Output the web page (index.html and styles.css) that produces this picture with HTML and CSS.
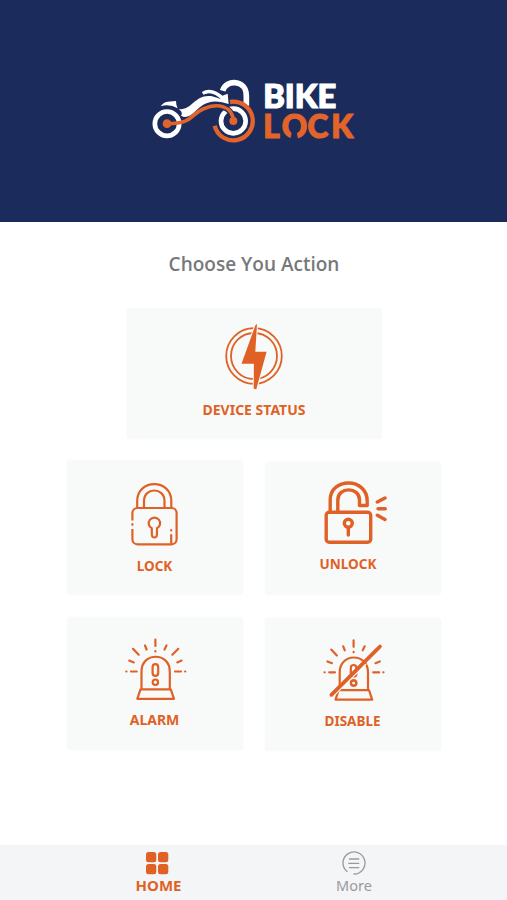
FILE: index.html
```html
<!DOCTYPE html>
<html lang="en">
<head>
<meta charset="utf-8">
<title>Bike Lock</title>
<link rel="stylesheet" href="styles.css">
</head>
<body>
<div class="app">
<header class="hero">
  <svg class="logo" viewBox="145 70 220 80">
    <g transform="translate(145 70) scale(.33333)" fill="none">
      <path d="M233 62C243 27 304 29 304 77V107" stroke="#fff" stroke-width="17"/>
      <path d="M255 96A58 58 0 1 1 209 167" stroke="#e2642a" stroke-width="13"/>
      <circle cx="66" cy="161" r="36.500" stroke="#fff" stroke-width="14"/>
      <circle cx="265" cy="153" r="37" stroke="#fff" stroke-width="14"/>
      <path d="M47 109Q54 97 68 95L93 93Q93 105 98 115Q74 101 47 109Z" fill="#fff"/>
      <path d="M101 117C138 123 148 78 190 78C207 78 216 84 226 87L230 78L248 71L251 102L231 97C190 88 168 107 148 127C133 141 120 144 108 137C114 130 108 122 101 117Z" fill="#fff"/>
      <path d="M173 70Q200 54 232 84" stroke="#fff" stroke-width="10"/>
      <path d="M170 121C218 99 263 108 265 153" stroke="#1b2c5c" stroke-width="17"/>
      <path d="M66 161C145 161 135 134 174 117C218 97 263 108 265 153" stroke="#e2642a" stroke-width="11"/>
      <circle cx="66" cy="161" r="13" fill="#e2642a"/>
      <circle cx="265" cy="153" r="12" fill="#e2642a"/>
    </g>
    <text class="brand brand-top" x="263.200" y="107.800" textLength="73" lengthAdjust="spacingAndGlyphs">BIKE</text>
    <text class="brand brand-bottom" x="263.200 281.800 307.500 331.300" y="137.600">LOCK</text>
    <path d="M290.200 139.500L291.500 134L290.500 129H298L297 134L298.300 139.500Z" fill="#1b2c5c"/>
  </svg>
</header>
<main class="content">
  <h1 class="title">Choose You Action</h1>
  <section class="card status">
    <svg class="icon" viewBox="214 320 80 74">
      <circle cx="254" cy="356" r="27.800" stroke-width="1.800"/>
      <circle cx="254" cy="356" r="23" stroke-width="1.800"/>
      <path d="M257 324L255.300 351.700H266.600L256.200 389.500L253.700 388.500L253.900 363.700H241.500L255.500 325Z" fill="#e06126" stroke="#f8faf9" stroke-width="2" paint-order="stroke"/>
    </svg>
    <span class="label">DEVICE STATUS</span>
  </section>
  <div class="grid">
    <section class="card lock">
      <svg class="icon" viewBox="115 475 80 74">
        <rect x="132.400" y="508" width="44.200" height="36.300" rx="5"/>
        <path d="M137.200 508V501C137.200 478.500 171.300 478.500 171.300 501V508M144 508V501C144 487 164.500 487 164.500 501V508"/>
        <path d="M151.800 528.300A5.700 5.700 0 1 1 157 528.300V534.500Q156.700 537.500 154.400 537.500Q152 537.500 151.800 534.500Z"/>
        <path d="M132.400 520.500V529" stroke="#f8faf9" stroke-width="4"/>
        <path d="M132.400 524.200V524.800M171.200 530V530.500M171.200 535V543" stroke-linecap="round"/>
      </svg>
      <span class="label">LOCK</span>
    </section>
    <section class="card unlock">
      <svg class="icon" viewBox="313 475 80 74">
        <g stroke-width="3.400">
          <rect x="326.200" y="512.300" width="44.500" height="30" rx="3"/>
          <path d="M330.200 512V500C330.200 477.200 367.200 477.200 367.200 501V505.500H359.500V500C359.500 486.500 337.800 486.500 337.800 500V512" stroke-linejoin="round"/>
          <circle cx="348.300" cy="523.300" r="4"/>
          <path d="M348.300 527.500V535M377.300 502L385 498M378 508.700H385.300M377.300 515.200L385 519.500" stroke-linecap="round"/>
        </g>
      </svg>
      <span class="label">UNLOCK</span>
    </section>
    <section class="card alarm">
      <svg class="icon" viewBox="115 632 80 74">
        <g id="siren">
          <path d="M141.500 689V671.500C141.500 651.800 169.800 651.800 169.800 671.500V689M140.500 689.300H170.800L174 698.800H137.300Z" stroke-linejoin="round"/>
          <rect x="152.600" y="664.200" width="5.600" height="11.600" rx="2.800"/>
          <circle cx="155.400" cy="682.200" r="2.700"/>
          <path d="M155.400 639.500V646M155.400 651V651.500M145 645.500L146.600 649.500M166.500 645.500L164.500 649.500M133 648.800L138.700 654.700M178.300 648.800L172.300 654.700M129.200 660.600L133.800 662.400M181.600 660.600L177.300 662.400M131 671.500H136.800M175 671.500H181M126.300 671.500H126.500M185.100 671.500H185.300" stroke-linecap="round"/>
        </g>
      </svg>
      <span class="label">ALARM</span>
    </section>
    <section class="card disable">
      <svg class="icon" viewBox="313 632 80 74">
        <use href="#siren" x="198.200" y=".8"/>
        <path d="M334 695.500L366 664" stroke="#f8faf9" stroke-width="1.600"/>
        <circle cx="353.600" cy="683" r="2.700"/>
        <path d="M331.400 694.800L380 646.500" stroke-width="3.800" stroke-linecap="round"/>
      </svg>
      <span class="label">DISABLE</span>
    </section>
  </div>
</main>
<nav class="tabs">
  <a class="tab active">
    <svg class="tab-icon" viewBox="0 0 24 24"><g fill="#e06126"><rect x="1" y="1" width="10.300" height="10.300" rx="2.500"/><rect x="13" y="1" width="10.300" height="10.300" rx="2.500"/><rect x="1" y="13" width="10.300" height="10.300" rx="2.500"/><rect x="13" y="13" width="10.300" height="10.300" rx="2.500"/></g></svg>
    <span class="tab-label">HOME</span>
  </a>
  <a class="tab more">
    <svg class="tab-icon" viewBox="0 0 24 24"><path d="M5 20.500A11 11 0 1 1 12 23M7.500 8H16.800M6.700 12.300H16.800M7.500 16.700H16.800" fill="none" stroke="#999a9c" stroke-width="1.300" stroke-linecap="round"/></svg>
    <span class="tab-label">More</span>
  </a>
</nav>
</div>
</body>
</html>
```
FILE: styles.css
```css
* { box-sizing: border-box; }
body { margin: 0; background: #fff; font-family: "Noto Sans", "Open Sans", sans-serif; }
.app { width: 507px; height: 900px; display: flex; flex-direction: column; }
.hero { height: 222px; flex: none; background: #1b2c5c; padding: 70px 0 0 145px; }
.logo { display: block; width: 220px; height: 80px; }
.brand { font-family: Lato, sans-serif; font-weight: 900; font-size: 31.5px; stroke-width: 1.2px; }
.brand-top { fill: #fff; stroke: #fff; }
.brand-bottom { fill: #e2642a; stroke: #e2642a; }
.content { flex: 1; display: flex; flex-direction: column; align-items: center; }
.title { margin: 28px 0 0 1px; height: 28px; line-height: 28px; font-family: "Open Sans", sans-serif; font-size: 19px; font-weight: 600; color: #77787a; white-space: nowrap; }
.card { display: flex; flex-direction: column; align-items: center; background: #f8faf9; border-radius: 3px; box-shadow: 0 0 3px #f8faf9; }
.icon { display: block; width: 80px; height: 74px; flex: none; fill: none; stroke: #e06126; stroke-width: 2.2; }
.label { color: #e06126; font-size: 13.5px; line-height: 18px; font-weight: 700; white-space: nowrap; }
.status { width: 255px; height: 131px; margin: 30px 0 0 1px; padding-top: 12px; }
.status .label { margin-top: 7px; font-size: 14px; }
.grid { display: grid; grid-template-columns: 176px 176px; column-gap: 22px; row-gap: 22px; margin-top: 21px; }
.grid .card { height: 135px; padding-top: 15px; }
.grid .label { margin-top: 8px; }
.grid .unlock { height: 133px; margin-top: 2px; padding-top: 13px; }
.grid .unlock .label { margin: 6px 9px 0 0; }
.grid .alarm { height: 133px; }
.grid .alarm .label { margin-top: 5px; font-size: 14px; }
.grid .disable { height: 133px; margin-top: 1px; padding-top: 14px; }
.grid .disable .label { margin-top: 6px; }
.tabs { height: 55px; flex: none; display: flex; justify-content: center; background: #f4f5f7; padding: 6px 0 0 4px; }
.tab { width: 197px; display: flex; flex-direction: column; align-items: center; }
.tab-icon { width: 24px; height: 24px; display: block; }
.tab-label { font-size: 14.5px; line-height: 20px; color: #999a9c; }
.active .tab-label { color: #e06126; font-weight: 700; font-size: 15px; margin-left: 3px; }
```
